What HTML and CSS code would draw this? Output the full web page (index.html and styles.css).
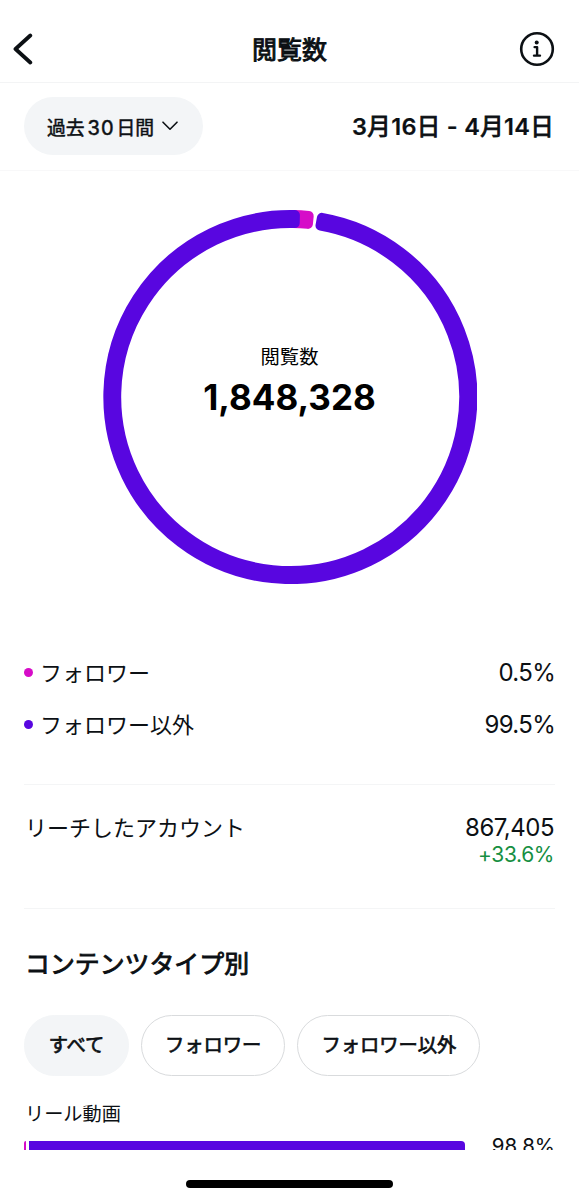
FILE: index.html
```
<!DOCTYPE html>
<html lang="ja">
<head>
  <meta charset="UTF-8">
  <title>閲覧数</title>
  <meta name="viewport" content="width=device-width, initial-scale=1">
  <link rel="stylesheet" href="styles.css">
</head>
<body>
  <div class="screen">
    <header class="header">
      <svg class="back" viewBox="0 0 20 32"><path d="M17.3 2.5 2.5 16l14.8 13.5"/></svg>
      <h1>閲覧数</h1>
      <svg class="info" viewBox="0 0 36 36">
        <circle cx="18" cy="18" r="15.8"/>
        <circle class="dot" cx="17.7" cy="11.4" r="2"/>
        <path d="M15.6 16.1h2.5v8.3M15 24.6h6"/>
      </svg>
    </header>

    <div class="filter">
      <button class="period"><span>過去<span class="days">30</span>日間</span>
        <svg viewBox="0 0 16 10"><path d="M1 1.2l7 7 7-7"/></svg>
      </button>
      <div class="range"><b>3</b>月<b>16</b>日<b> - 4</b>月<b>14</b>日</div>
    </div>

    <main class="content">
      <!-- Donut chart -->
      <div class="donut">
        <svg viewBox="0 0 374 374">
          <path class="follower" d="M190 5 A182 182 0 0 1 205.7 6 L204.9 13.9 A174 174 0 0 0 190 13 Z"/>
          <path class="other" d="M218.9 7.8 A182 182 0 1 1 191.9 5.1 L191.7 13.1 A174 174 0 1 0 217.5 15.7 Z"/>
        </svg>
        <div class="total">
          <div class="total-label">閲覧数</div>
          <div class="total-value">1,848,328</div>
        </div>
      </div>

      <!-- Legend -->
      <div class="legend">
        <div class="legend-row"><span class="bullet follower"></span><span class="name">フォロワー</span><span class="value">0.5%</span></div>
        <div class="legend-row"><span class="bullet other"></span><span class="name">フォロワー以外</span><span class="value">99.5%</span></div>
      </div>

      <div class="reach">
        <div class="name">リーチしたアカウント</div>
        <div class="reach-numbers">
          <div class="value">867,405</div>
          <div class="change">+33.6%</div>
        </div>
      </div>

      <h2>コンテンツタイプ別</h2>
      <div class="tabs">
        <button class="tab active">すべて</button>
        <button class="tab">フォロワー</button>
        <button class="tab">フォロワー以外</button>
      </div>

      <div class="type-name">リール動画</div>
      <div class="type-row">
        <div class="bar">
          <div class="bar-follower"></div>
          <div class="bar-other"></div>
        </div>
        <div class="percent">98.8%</div>
      </div>
    </main>

    <footer class="home"><div class="home-bar"></div></footer>
  </div>
</body>
</html>
```
FILE: styles.css
```
* { box-sizing: border-box; }
body {
  margin: 0;
  background: #fff;
  color: #0c1014;
  font-family: Inter, "Noto Sans CJK JP", sans-serif;
}
button {
  font-family: inherit;
  color: inherit;
  border: none;
}
svg {
  display: block;
  fill: none;
  stroke: currentColor;
  stroke-linecap: round;
  stroke-linejoin: round;
}
.screen {
  display: flex;
  flex-direction: column;
  height: 1200px;
  overflow: hidden;
}
/* Semibold look for the Japanese glyphs */
h1, h2, .period, .range, .tab {
  font-weight: 400;
  -webkit-text-stroke: 0.9px currentColor;
}
/* Header */
.header {
  display: grid;
  grid-template-columns: 36px 1fr 36px;
  align-items: center;
  height: 83px;
  padding: 16px 24px 0 13px;
  border-bottom: 1px solid #f3f4f5;
}
.back { width: 20px; height: 32px; stroke-width: 3.8; }
.header h1 {
  margin: 2px 0 0 11px;
  font-size: 25px;
  line-height: 36px;
  text-align: center;
}
.info { width: 36px; height: 36px; stroke-width: 2.6; }
.info path { stroke-width: 2.4; }
.info .dot { fill: currentColor; stroke: none; }
/* Period filter */
.filter {
  display: flex;
  align-items: center;
  justify-content: space-between;
  height: 88px;
  padding: 0 25px 2px 24px;
  border-bottom: 1px solid #f8f8f9;
}
.period {
  display: flex;
  align-items: center;
  gap: 8px;
  width: 179px;
  height: 58px;
  padding: 1px 23px 0;
  border-radius: 29px;
  background: #f3f5f7;
  font-size: 18.8px;
  -webkit-text-stroke-width: 0.5px;
  white-space: nowrap;
}
.days { margin: 0 2px 0 3px; font-size: 20px; letter-spacing: 1px; }
.period svg { width: 16px; height: 10px; stroke-width: 1.6; }
.range { padding-top: 2px; font-size: 23.5px; line-height: 32px; letter-spacing: 0.3px; white-space: nowrap; }
.range b { font-weight: 600; -webkit-text-stroke-width: 0.2px; }
/* Chart */
.content {
  flex: none;
  height: 979px;
  padding: 0 24px;
  overflow: hidden;
}
.donut {
  display: grid;
  width: 374px;
  height: 374px;
  margin: 39px auto 0;
}
.donut > * { grid-area: 1 / 1; }
.donut path { stroke-width: 10; }
.donut .follower { fill: #d60cc8; stroke: #d60cc8; }
.donut .other { fill: #5806e0; stroke: #5806e0; }
.total { margin-top: 133px; text-align: center; color: #000; }
.total-label { font-size: 19.3px; line-height: 28px; }
.total-value { margin-top: 4px; font-size: 35px; line-height: 44px; font-weight: 700; }
/* Legend */
.legend { margin-top: 62.5px; padding-bottom: 33px; border-bottom: 1px solid #f4f5f6; }
.legend-row {
  display: flex;
  align-items: center;
  height: 52px;
}
.bullet { width: 9px; height: 9px; margin-right: 7px; border-radius: 50%; }
.bullet.follower { background: #d60cc8; }
.bullet.other { background: #5806e0; }
.name { font-size: 22px; line-height: 32px; }
.value { margin-left: auto; font-size: 24px; line-height: 32px; letter-spacing: -0.7px; }
.reach {
  display: flex;
  justify-content: space-between;
  height: 124px;
  padding: 27px 1px 0;
  border-bottom: 1px solid #f4f5f6;
}
.reach .value { letter-spacing: -0.5px; }
.reach-numbers { text-align: right; }
.change { margin-top: -2px; color: #168f42; font-size: 21px; line-height: 26px; letter-spacing: -0.4px; }
/* Content types */
h2 { margin: 37px 0 0 1px; font-size: 24.9px; line-height: 36px; }
.tabs { display: flex; gap: 12px; margin-top: 33px; }
.tab {
  height: 61px;
  padding: 0 23px 2px;
  border: 1px solid #d9dbdd;
  border-radius: 31px;
  background: #fff;
  font-size: 19.3px;
  -webkit-text-stroke-width: 0.7px;
  white-space: nowrap;
}
.tab.active { width: 105px; background: #f3f5f7; border-color: #f3f5f7; }
.type-name { margin: 23px 0 0 1px; font-size: 19.2px; line-height: 30px; }
.type-row { display: flex; justify-content: space-between; margin-top: 7px; }
.bar { display: flex; gap: 3px; width: 441px; height: 18px; margin-top: 5px; }
.bar-follower { width: 2px; border-radius: 2px 0 0 2px; background: #d60cc8; }
.bar-other { flex: 1; border-radius: 0 4px 4px 0; background: #5806e0; }
.percent { margin-top: -2px; font-size: 20.5px; line-height: 24px; }
/* Home indicator */
.home { display: flex; justify-content: center; padding-top: 30px; }
.home-bar { width: 207px; height: 8px; border-radius: 4px; background: #000; }
```
